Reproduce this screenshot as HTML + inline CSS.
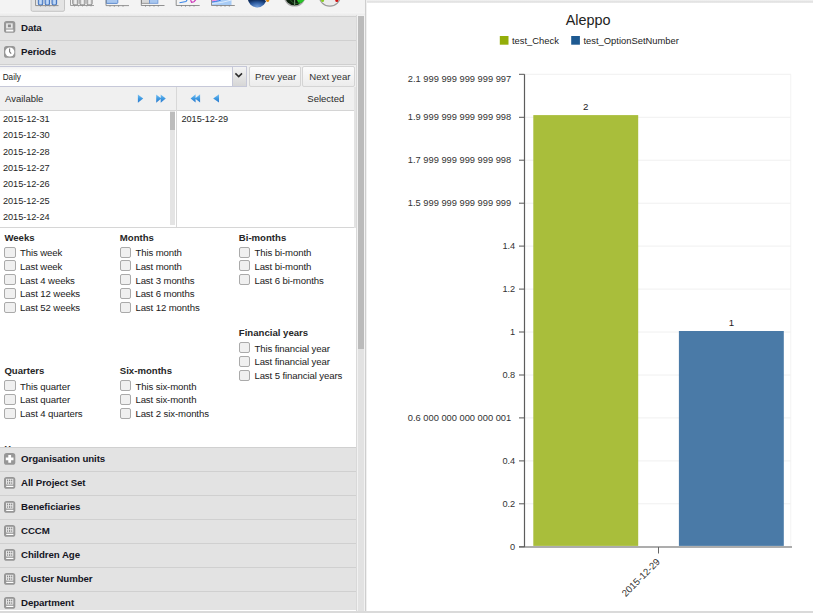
<!DOCTYPE html>
<html><head><meta charset="utf-8">
<style>
*{box-sizing:border-box;margin:0;padding:0}
html,body{width:813px;height:613px;overflow:hidden;background:#fff;font-family:"Liberation Sans",sans-serif;color:#333}
.a{position:absolute}
.hdr{position:absolute;left:0;width:357px;height:25px;background:#e3e3e3;border-top:1px solid #d0d0d0;border-right:1px solid #d0d0d0;box-shadow:inset 0 -1px 0 #ebebeb}
.hdr .ic{position:absolute;left:3.8px;top:5.1px;width:12px;height:12px}
.hdr .t{position:absolute;left:21px;top:5.2px;font-size:9.7px;letter-spacing:-0.08px;font-weight:bold;color:#15151f;line-height:12px;white-space:nowrap}
.li{position:absolute;left:3px;font-size:9.2px;letter-spacing:-0.05px;color:#1e1e1e;line-height:10px;white-space:nowrap}
.gt{position:absolute;font-size:9.6px;font-weight:bold;color:#262626;line-height:11px;white-space:nowrap}
.cb{position:absolute;width:11.3px;height:11px;border:1px solid #aaaaaa;border-radius:2px;background:#f0f0f0}
.cl{position:absolute;font-size:9.6px;letter-spacing:-0.1px;color:#1a1a1a;line-height:11px;white-space:nowrap}
.btn{position:absolute;top:66px;height:21px;padding-left:2.2px;border:1px solid #d4d4d4;border-radius:2px;background:linear-gradient(#fbfbfb,#ececec);font-size:9.6px;color:#333;line-height:19.5px;text-align:center}
.yl{position:absolute;right:0;font-size:9.2px;color:#333;line-height:10px;white-space:nowrap;text-align:right}
</style></head><body>
<svg width="0" height="0" style="position:absolute">
<defs>
<symbol id="i-data" viewBox="0 0 12 12"><rect x="0" y="0" width="11.3" height="11.8" rx="2.6" fill="#979797"/><rect x="2.1" y="2.3" width="6.6" height="5.2" fill="#e6e6e6"/><rect x="3.9" y="3.5" width="3" height="2.7" fill="#8a8a8a"/><rect x="2.1" y="8.6" width="7.2" height="1.9" fill="#fafafa"/></symbol>
<symbol id="i-clock" viewBox="0 0 12 12"><rect x="0" y="0" width="11.3" height="11.8" rx="2.6" fill="#979797"/><circle cx="5.8" cy="6" r="4.6" fill="#fff"/><path d="M5.6 2.4 V5.8 L7.2 7.7" stroke="#7a7a7a" stroke-width="1.1" fill="none"/></symbol>
<symbol id="i-plus" viewBox="0 0 12 12"><rect x="0" y="0" width="11.3" height="11.8" rx="2.6" fill="#979797"/><path d="M4.3 2.1 H7.1 V4.6 H9.5 V7.3 H7.1 V9.8 H4.3 V7.3 H1.8 V4.6 H4.3 Z" fill="#fff"/></symbol>
<symbol id="i-grid" viewBox="0 0 12 12"><rect x="0" y="0" width="11.3" height="11.8" rx="2.6" fill="#979797"/><rect x="2" y="1.8" width="7.3" height="5.2" fill="#e6e6e6"/><path d="M3.55 2 V6.8 M5.65 2 V6.8 M7.7 2 V6.8" stroke="#bdbdbd" stroke-width="0.7"/><g fill="#6e6e6e"><circle cx="3.55" cy="3.3" r="0.55"/><circle cx="5.65" cy="3.3" r="0.6"/><circle cx="7.7" cy="3.3" r="0.55"/><circle cx="3.55" cy="6" r="0.55"/><circle cx="5.65" cy="6" r="0.65"/><circle cx="7.7" cy="6" r="0.55"/></g><rect x="2.2" y="7.4" width="7" height="0.7" fill="#eeeeee"/><rect x="2.2" y="8.9" width="7.2" height="1.1" fill="#fff"/></symbol>
</defs></svg>

<!-- toolbar -->
<div class="a" style="left:0;top:0;width:365px;height:12.3px;background:#f3f3f3"></div>
<div class="a" style="left:0;top:12.3px;width:365px;height:4px;background:linear-gradient(#f6f6f6,#e9e9e9)"></div>

<svg class="a" style="left:0;top:0" width="365" height="14" viewBox="0 0 365 14">
<defs>
<linearGradient id="cb1" x1="0" y1="0" x2="1" y2="0"><stop offset="0" stop-color="#8fb3e6"/><stop offset="0.5" stop-color="#c4dbf7"/><stop offset="1" stop-color="#8fb3e6"/></linearGradient>
<linearGradient id="gb1" x1="0" y1="0" x2="1" y2="0"><stop offset="0" stop-color="#c8c8c8"/><stop offset="0.5" stop-color="#f0f0f0"/><stop offset="1" stop-color="#c8c8c8"/></linearGradient>
<radialGradient id="pie" cx="0.5" cy="0.9" r="0.7"><stop offset="0" stop-color="#6d9ad8"/><stop offset="0.6" stop-color="#2c5a9e"/><stop offset="1" stop-color="#0f2d5e"/></radialGradient>
</defs>
<path d="M31.1 -2 V9.8 Q31.1 11.3 32.6 11.3 H63 Q64.5 11.3 64.5 9.8 V-2" fill="#e4e4e4" stroke="#c4c4c4" stroke-width="1"/>
<rect x="36" y="0" width="21" height="5" fill="#ececec"/>
<g stroke="#3f72bf" stroke-width="1.05" fill="url(#cb1)"><path d="M38.3 -1 V3.6 Q38.3 4.9 39.6 4.9 H41.6 Q42.8 4.9 42.8 3.6 V-1"/><path d="M45.1 -1 V3.6 Q45.1 4.9 46.4 4.9 H48.4 Q49.6 4.9 49.6 3.6 V-1"/><path d="M52 -1 V3.6 Q52 4.9 53.3 4.9 H55.3 Q56.6 4.9 56.6 3.6 V-1"/></g>
<path d="M35.6 0 V5.6 H58.5" stroke="#7a7a7a" stroke-width="0.8" fill="none"/>
<g stroke="#8a8a8a" stroke-width="0.7"><path d="M40.5 5.6 V6.6 M45.5 5.6 V6.6 M49.8 5.6 V6.6 M54 5.6 V6.6"/></g>
<g stroke="#7c7c7c" stroke-width="0.9" fill="url(#gb1)"><path d="M72.8 -1 V3.6 Q72.8 4.9 74.1 4.9 H76.6 Q77.9 4.9 77.9 3.6 V-1"/><path d="M79.9 -1 V3.6 Q79.9 4.9 81.2 4.9 H83.7 Q85 4.9 85 3.6 V-1"/><path d="M87 -1 V3.6 Q87 4.9 88.3 4.9 H90.8 Q92.1 4.9 92.1 3.6 V-1"/></g>
<path d="M70.5 0 V5.5 H94" stroke="#8a8a8a" stroke-width="0.8" fill="none"/>
<g stroke="#8a8a8a" stroke-width="0.7"><path d="M74.5 5.5 V6.5 M78.5 5.5 V6.5 M82.5 5.5 V6.5 M86.8 5.5 V6.5 M91 5.5 V6.5"/></g>
<path d="M106.3 -1 H117.3 Q117.8 -1 117.8 0 V2.6 Q117.8 3.4 117 3.4 H106.3 Z" fill="#a9c7ef" stroke="#5685cc" stroke-width="0.9"/>
<path d="M106 0 V5.6 H129" stroke="#7a7a7a" stroke-width="0.8" fill="none"/>
<g stroke="#7a7a7a" stroke-width="0.8"><path d="M110 5.6 V6.7 M114.3 5.6 V6.7 M118.6 5.6 V6.7 M123 5.6 V6.7"/></g>
<rect x="141.6" y="-1" width="8" height="4.3" fill="#d8d8d8" stroke="#888" stroke-width="0.8"/>
<rect x="149.6" y="-1" width="8.3" height="4.3" fill="#a9c7ef" stroke="#6a95d6" stroke-width="0.8"/>
<path d="M141.3 0 V5.5 H164.5" stroke="#777" stroke-width="0.8" fill="none"/>
<g stroke="#777" stroke-width="0.8"><path d="M145.5 5.5 V6.6 M149.8 5.5 V6.6 M154 5.5 V6.6 M158.3 5.5 V6.6"/></g>
<path d="M179.5 2.8 L186 1.6 L187.3 -0.5" stroke="#3b87e8" stroke-width="1.1" fill="none"/>
<path d="M190.5 -0.5 L191.5 2.3 L194 1.7 L196 -0.5" stroke="#cc2fb8" stroke-width="1.1" fill="none"/>
<path d="M176.2 0 V5.5 H199.7" stroke="#777" stroke-width="0.8" fill="none"/>
<g stroke="#777" stroke-width="0.8"><path d="M181.5 5.5 V6.6 M185.5 5.5 V6.6 M189.8 5.5 V6.6 M194 5.5 V6.6"/></g>
<path d="M212 0 H231.5 V5.2 H212 Z" fill="#a7cbf5"/>
<path d="M212 -1 V1.8 Q220 0 222 -1 Z" fill="#f08fe0"/>
<path d="M212 2 Q220 1 221.5 -0.5" stroke="#2f6fe0" stroke-width="0.9" fill="none"/>
<path d="M212 3.6 Q222 3 231.5 0" stroke="#eaf3fd" stroke-width="0.8" fill="none"/>
<path d="M211.5 0 V5.5 H234.8" stroke="#777" stroke-width="0.8" fill="none"/>
<g stroke="#777" stroke-width="0.8"><path d="M217 5.5 V6.6 M221 5.5 V6.6 M225 5.5 V6.6 M229.3 5.5 V6.6"/></g>
<path d="M247.8 -2 A9.4 9.4 0 0 0 266.6 -2 L266 1 L262 -2 Z" fill="url(#pie)"/>
<circle cx="267.7" cy="0.3" r="1.6" fill="#e08a10"/>
<circle cx="294.6" cy="-4.4" r="11" fill="#a9a9a9"/>
<circle cx="294.6" cy="-4.4" r="9.6" fill="#0c1f0c"/>
<path d="M294.6 -4.4 L305 -1 A9.6 9.6 0 0 1 299 4 Z" fill="#29c229"/>
<path d="M290 -2 A6 6 0 0 0 300 2" stroke="#2a6a2a" stroke-width="0.8" fill="none"/>
<path d="M294.6 -4 V6" stroke="#6a8a6a" stroke-width="1.2"/>
<circle cx="329.8" cy="-4.4" r="11.2" fill="#9a9a9a"/>
<circle cx="329.8" cy="-4.4" r="10" fill="#ececec"/>
<circle cx="322.6" cy="0.4" r="1.5" fill="#88cc22"/>
<circle cx="336.8" cy="0.4" r="1.5" fill="#d01010"/>
</svg>
<!-- left accordion headers -->
<div class="hdr" style="top:15.9px"><svg class="ic" style="top:4.5px"><use href="#i-data"/></svg><div class="t">Data</div></div>
<div class="hdr" style="top:39.6px"><svg class="ic"><use href="#i-clock"/></svg><div class="t">Periods</div></div>

<!-- periods body -->
<div class="a" style="left:0;top:65px;width:357px;height:382px;background:#fff"></div>
<div class="a" style="left:0;top:64.6px;width:357px;height:22.4px;background:#efefef"></div>
<div class="a" style="left:0;top:64px;width:357px;height:1px;background:#cfcfcf"></div>
<!-- combo -->
<div class="a" style="left:0;top:66px;width:231.5px;height:21px;border:1px solid #c6c8d8;border-left:none;border-right:none;background:linear-gradient(#f2f2f2,#fff 5px)"></div>
<div class="a" style="left:2.7px;top:71.6px;font-size:8.2px;color:#222;line-height:12px">Daily</div>
<div class="a" style="left:231.5px;top:66px;width:15px;height:21px;border:1px solid #c6c8d8;background:linear-gradient(#f4f4f4,#d6d6d6)"></div>
<div class="btn" style="left:248.5px;width:52px">Prev year</div>
<div class="btn" style="left:302.3px;width:53px">Next year</div>

<!-- available/selected header -->
<div class="a" style="left:0;top:87px;width:355px;height:24px;background:#f0f0f0;border-bottom:1px solid #d4d4d4"></div>
<div class="a" style="left:5px;top:92.8px;font-size:9.5px;color:#2a2a2a;line-height:12px">Available</div>
<div class="a" style="left:307.3px;top:92.8px;font-size:9.5px;color:#2a2a2a;line-height:12px">Selected</div>
<div class="a" style="left:176px;top:87px;width:1px;height:141px;background:#d8d8d8"></div>
<svg class="a" style="left:0;top:0" width="357" height="110" viewBox="0 0 357 110">
<defs><linearGradient id="bl" x1="0" y1="0" x2="0" y2="1"><stop offset="0" stop-color="#7cc4f4"/><stop offset="0.5" stop-color="#3f9ae2"/><stop offset="1" stop-color="#2a78cc"/></linearGradient></defs>
<path d="M137.9 94.4 L143.2 98.5 L137.9 102.7 Z" fill="url(#bl)"/>
<path d="M156.2 94.4 L161.3 98.5 L156.2 102.7 Z M160.7 94.4 L165.8 98.5 L160.7 102.7 Z" fill="url(#bl)"/>
<path d="M195.6 94.2 L190.6 98.4 L195.6 102.6 Z M200.1 94.2 L195.1 98.4 L200.1 102.6 Z" fill="url(#bl)"/>
<path d="M219 94.2 L213.2 98.4 L219 102.6 Z" fill="url(#bl)"/>
<path d="M235.4 73.4 L238.7 76.6 L242 73.4" stroke="#2a2a2a" stroke-width="1.5" fill="none"/>
</svg>
<!-- lists -->
<div class="a" style="left:0;top:227px;width:355px;height:1px;background:#d6d6d6"></div>
<div class="a" style="left:354px;top:87px;width:2px;height:141px;background:#e3e3e3"></div>
<div class="a" style="left:169.5px;top:111px;width:5.5px;height:113.5px;background:#e4e4e4"></div>
<div class="a" style="left:169.5px;top:112px;width:5.5px;height:18px;background:#bcbcbc"></div>

<div class="li" style="top:114px">2015-12-31</div>
<div class="li" style="top:130.3px">2015-12-30</div>
<div class="li" style="top:146.6px">2015-12-28</div>
<div class="li" style="top:162.9px">2015-12-27</div>
<div class="li" style="top:179.2px">2015-12-26</div>
<div class="li" style="top:195.5px">2015-12-25</div>
<div class="li" style="top:211.8px">2015-12-24</div>
<div class="li" style="left:181.5px;top:114px">2015-12-29</div>

<!-- checkbox groups -->
<div class="gt" style="left:4.4px;top:232.3px">Weeks</div>
<div class="cb" style="left:4.4px;top:246.6px"></div><div class="cl" style="left:20.0px;top:247.2px">This week</div>
<div class="cb" style="left:4.4px;top:260.35px"></div><div class="cl" style="left:20.0px;top:260.95px">Last week</div>
<div class="cb" style="left:4.4px;top:274.1px"></div><div class="cl" style="left:20.0px;top:274.7px">Last 4 weeks</div>
<div class="cb" style="left:4.4px;top:287.85px"></div><div class="cl" style="left:20.0px;top:288.45px">Last 12 weeks</div>
<div class="cb" style="left:4.4px;top:301.6px"></div><div class="cl" style="left:20.0px;top:302.2px">Last 52 weeks</div>
<div class="gt" style="left:119.8px;top:232.3px">Months</div>
<div class="cb" style="left:119.8px;top:246.6px"></div><div class="cl" style="left:135.4px;top:247.2px">This month</div>
<div class="cb" style="left:119.8px;top:260.35px"></div><div class="cl" style="left:135.4px;top:260.95px">Last month</div>
<div class="cb" style="left:119.8px;top:274.1px"></div><div class="cl" style="left:135.4px;top:274.7px">Last 3 months</div>
<div class="cb" style="left:119.8px;top:287.85px"></div><div class="cl" style="left:135.4px;top:288.45px">Last 6 months</div>
<div class="cb" style="left:119.8px;top:301.6px"></div><div class="cl" style="left:135.4px;top:302.2px">Last 12 months</div>
<div class="gt" style="left:238.8px;top:232.3px">Bi-months</div>
<div class="cb" style="left:238.8px;top:246.6px"></div><div class="cl" style="left:254.4px;top:247.2px">This bi-month</div>
<div class="cb" style="left:238.8px;top:260.35px"></div><div class="cl" style="left:254.4px;top:260.95px">Last bi-month</div>
<div class="cb" style="left:238.8px;top:274.1px"></div><div class="cl" style="left:254.4px;top:274.7px">Last 6 bi-months</div>
<div class="gt" style="left:238.8px;top:327.2px">Financial years</div>
<div class="cb" style="left:238.8px;top:342.0px"></div><div class="cl" style="left:254.4px;top:342.6px">This financial year</div>
<div class="cb" style="left:238.8px;top:355.75px"></div><div class="cl" style="left:254.4px;top:356.35px">Last financial year</div>
<div class="cb" style="left:238.8px;top:369.5px"></div><div class="cl" style="left:254.4px;top:370.1px">Last 5 financial years</div>
<div class="gt" style="left:4.4px;top:364.5px">Quarters</div>
<div class="cb" style="left:4.4px;top:380.0px"></div><div class="cl" style="left:20.0px;top:380.6px">This quarter</div>
<div class="cb" style="left:4.4px;top:393.75px"></div><div class="cl" style="left:20.0px;top:394.35px">Last quarter</div>
<div class="cb" style="left:4.4px;top:407.5px"></div><div class="cl" style="left:20.0px;top:408.1px">Last 4 quarters</div>
<div class="gt" style="left:119.8px;top:364.5px">Six-months</div>
<div class="cb" style="left:119.8px;top:380.0px"></div><div class="cl" style="left:135.4px;top:380.6px">This six-month</div>
<div class="cb" style="left:119.8px;top:393.75px"></div><div class="cl" style="left:135.4px;top:394.35px">Last six-month</div>
<div class="cb" style="left:119.8px;top:407.5px"></div><div class="cl" style="left:135.4px;top:408.1px">Last 2 six-months</div>
<div class="gt" style="left:4.4px;top:443.2px">Years</div>

<!-- dimension headers -->
<div class="hdr" style="top:447.2px"><svg class="ic"><use href="#i-plus"/></svg><div class="t">Organisation units</div></div>
<div class="hdr" style="top:471.2px"><svg class="ic"><use href="#i-grid"/></svg><div class="t">All Project Set</div></div>
<div class="hdr" style="top:495.2px"><svg class="ic"><use href="#i-grid"/></svg><div class="t">Beneficiaries</div></div>
<div class="hdr" style="top:519.2px"><svg class="ic"><use href="#i-grid"/></svg><div class="t">CCCM</div></div>
<div class="hdr" style="top:543.2px"><svg class="ic"><use href="#i-grid"/></svg><div class="t">Children Age</div></div>
<div class="hdr" style="top:567.2px"><svg class="ic"><use href="#i-grid"/></svg><div class="t">Cluster Number</div></div>
<div class="hdr" style="top:591.2px"><svg class="ic"><use href="#i-grid"/></svg><div class="t">Department</div></div>
<div class="a" style="left:0;top:609.8px;width:365px;height:3px;background:#fff"></div>
<!-- right scrollbar -->
<div class="a" style="left:356px;top:15px;width:1px;height:596px;background:#d9d9d9"></div>
<div class="a" style="left:357px;top:15px;width:8.5px;height:596px;background:#f2f2f2"></div>
<div class="a" style="left:358px;top:15.7px;width:6px;height:595px;background:#e2e2e2"></div>
<div class="a" style="left:358px;top:15.7px;width:6px;height:333.3px;background:#bbbbbb"></div>
<div class="a" style="left:365px;top:0;width:1px;height:613px;background:#cecece"></div>
<div class="a" style="left:366px;top:0;width:1px;height:613px;background:#f0f0f0"></div>

<!-- chart -->
<div class="a" style="left:366.5px;top:0;width:447px;height:3px;background:linear-gradient(#f4f4f4,#dcdcdc 70%,#f6f6f6)"></div>
<div class="a" style="left:0;top:610.6px;width:813px;height:2.4px;background:#dadada"></div>

<svg class="a" style="left:0;top:0" width="813" height="613" viewBox="0 0 813 613">
<text x="588.1" y="24.7" font-size="14.4" fill="#222" text-anchor="middle">Aleppo</text>
<rect x="499.8" y="36" width="8.7" height="8.7" fill="#94ae0a"/>
<text x="512" y="43.9" font-size="9.4" fill="#222">test_Check</text>
<rect x="571.2" y="36" width="8.7" height="8.7" fill="#1d5991"/>
<text x="583.5" y="43.9" font-size="9.4" fill="#222">test_OptionSetNumber</text>
<line x1="519" x2="524.5" y1="546.8" y2="546.8" stroke="#555" stroke-width="1"/>
<line x1="524.5" x2="791" y1="503.8" y2="503.8" stroke="#f0f0f0" stroke-width="1"/>
<line x1="519" x2="524.5" y1="503.8" y2="503.8" stroke="#555" stroke-width="1"/>
<line x1="524.5" x2="791" y1="460.9" y2="460.9" stroke="#f0f0f0" stroke-width="1"/>
<line x1="519" x2="524.5" y1="460.9" y2="460.9" stroke="#555" stroke-width="1"/>
<line x1="524.5" x2="791" y1="417.9" y2="417.9" stroke="#f0f0f0" stroke-width="1"/>
<line x1="519" x2="524.5" y1="417.9" y2="417.9" stroke="#555" stroke-width="1"/>
<line x1="524.5" x2="791" y1="375.0" y2="375.0" stroke="#f0f0f0" stroke-width="1"/>
<line x1="519" x2="524.5" y1="375.0" y2="375.0" stroke="#555" stroke-width="1"/>
<line x1="524.5" x2="791" y1="332.0" y2="332.0" stroke="#f0f0f0" stroke-width="1"/>
<line x1="519" x2="524.5" y1="332.0" y2="332.0" stroke="#555" stroke-width="1"/>
<line x1="524.5" x2="791" y1="289.1" y2="289.1" stroke="#f0f0f0" stroke-width="1"/>
<line x1="519" x2="524.5" y1="289.1" y2="289.1" stroke="#555" stroke-width="1"/>
<line x1="524.5" x2="791" y1="246.1" y2="246.1" stroke="#f0f0f0" stroke-width="1"/>
<line x1="519" x2="524.5" y1="246.1" y2="246.1" stroke="#555" stroke-width="1"/>
<line x1="524.5" x2="791" y1="203.2" y2="203.2" stroke="#f0f0f0" stroke-width="1"/>
<line x1="519" x2="524.5" y1="203.2" y2="203.2" stroke="#555" stroke-width="1"/>
<line x1="524.5" x2="791" y1="160.2" y2="160.2" stroke="#f0f0f0" stroke-width="1"/>
<line x1="519" x2="524.5" y1="160.2" y2="160.2" stroke="#555" stroke-width="1"/>
<line x1="524.5" x2="791" y1="117.3" y2="117.3" stroke="#f0f0f0" stroke-width="1"/>
<line x1="519" x2="524.5" y1="117.3" y2="117.3" stroke="#555" stroke-width="1"/>
<line x1="524.5" x2="791" y1="74.3" y2="74.3" stroke="#f0f0f0" stroke-width="1"/>
<line x1="519" x2="524.5" y1="74.3" y2="74.3" stroke="#555" stroke-width="1"/>
<line x1="790.8" x2="790.8" y1="74.3" y2="546.8" stroke="#f3f3f3" stroke-width="1"/>
<rect x="533.3" y="115.1" width="104.9" height="430.8" fill="#a9be3b"/>
<rect x="678.9" y="331" width="104.9" height="214.9" fill="#4a7aa7"/>
<line x1="524.5" x2="524.5" y1="74.3" y2="547" stroke="#5c5c5c" stroke-width="1.2"/>
<line x1="519" x2="792" y1="547" y2="547" stroke="#5c5c5c" stroke-width="1.2"/>
<line x1="658.5" x2="658.5" y1="547" y2="553.5" stroke="#666" stroke-width="1"/>
<text x="511.2" y="82.1" font-size="9.3" fill="#333" text-anchor="end">2.1 999 999 999 999 997</text>
<text x="511.2" y="119.5" font-size="9.3" fill="#333" text-anchor="end">1.9 999 999 999 999 998</text>
<text x="511.2" y="163.2" font-size="9.3" fill="#333" text-anchor="end">1.7 999 999 999 999 998</text>
<text x="511.2" y="206.2" font-size="9.3" fill="#333" text-anchor="end">1.5 999 999 999 999 999</text>
<text x="515.2" y="249.3" font-size="9.2" fill="#333" text-anchor="end">1.4</text>
<text x="515.2" y="292.3" font-size="9.2" fill="#333" text-anchor="end">1.2</text>
<text x="515.2" y="335.2" font-size="9.2" fill="#333" text-anchor="end">1</text>
<text x="515.2" y="378.2" font-size="9.2" fill="#333" text-anchor="end">0.8</text>
<text x="511.2" y="420.9" font-size="9.3" fill="#333" text-anchor="end">0.6 000 000 000 000 001</text>
<text x="515.2" y="464.1" font-size="9.2" fill="#333" text-anchor="end">0.4</text>
<text x="515.2" y="507.0" font-size="9.2" fill="#333" text-anchor="end">0.2</text>
<text x="515.2" y="550.0" font-size="9.2" fill="#333" text-anchor="end">0</text>
<text x="585.8" y="109.9" font-size="9.7" fill="#222" text-anchor="middle">2</text>
<text x="731.5" y="326.1" font-size="9.7" fill="#222" text-anchor="middle">1</text>
<text x="0" y="0" font-size="9.6" fill="#333" text-anchor="end" transform="translate(660.5,562.5) rotate(-45)">2015-12-29</text>
</svg>
</body></html>
